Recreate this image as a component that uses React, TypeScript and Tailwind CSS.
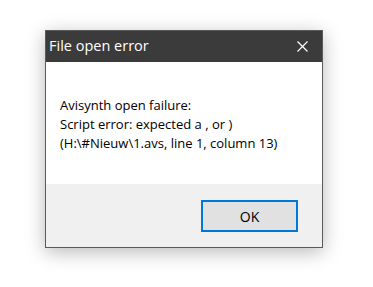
export default function App() {
  return (
    <div className="w-[373px] h-[287px] bg-white flex items-start justify-start">
      <div
        className="ml-[45px] mt-[30px] w-[278px] h-[218px] flex flex-col border border-[#5a5a5a] shadow-[0_4px_18px_rgba(0,0,0,0.28)]"
        style={{ fontFamily: '"Open Sans", "Noto Sans", sans-serif' }}
      >
        <div className="h-[31px] bg-[#3b3b3b] flex items-center justify-between pl-[3px] pr-[14px] text-white">
          <span className="text-[14.5px] leading-none">File open error</span>
          <svg width="11" height="11" viewBox="0 0 11 11" className="block">
            <path d="M0.5 0.5 L10.5 10.5 M10.5 0.5 L0.5 10.5" stroke="white" strokeWidth="1.2" />
          </svg>
        </div>
        <div className="h-[122px] bg-white flex items-center pl-[14px] pt-[3px]">
          <p className="text-[13px] leading-[19px] text-black">
            Avisynth open failure:
            <br />
            Script error: expected a , or )
            <br />
            (H:\#Nieuw\1.avs, line 1, column 13)
          </p>
        </div>
        <div className="flex-1 bg-[#f0f0f0] flex justify-end items-start pt-[16px] pr-[24px]">
          <button className="w-[97px] h-[32px] bg-[#e1e1e1] border-2 border-[#0078d7] text-[14px] text-black">
            OK
          </button>
        </div>
      </div>
    </div>
  )
}
